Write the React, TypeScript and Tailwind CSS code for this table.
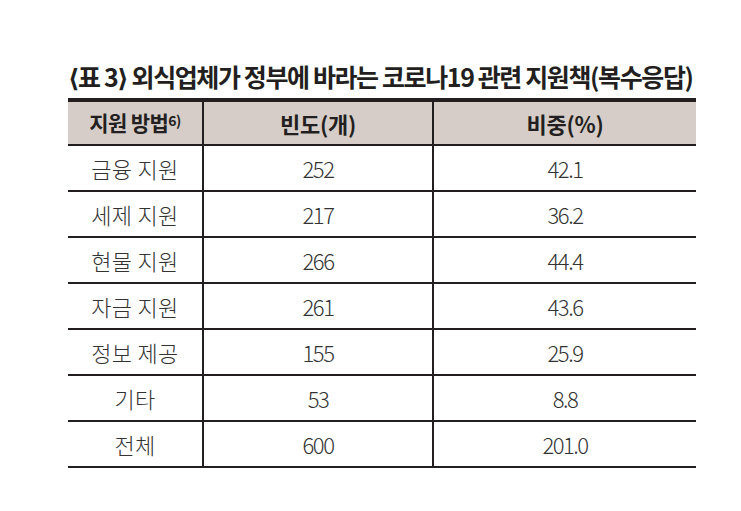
import React from "react";

const rows: [string, string, string][] = [
  ["금융 지원", "252", "42.1"],
  ["세제 지원", "217", "36.2"],
  ["현물 지원", "266", "44.4"],
  ["자금 지원", "261", "43.6"],
  ["정보 제공", "155", "25.9"],
  ["기타", "53", "8.8"],
  ["전체", "600", "201.0"],
];

export default function App() {
  return (
    <div
      className="w-[741px] h-[511px] bg-white pl-[68px] pt-[60px]"
      style={{ fontFamily: '"Noto Sans CJK KR", "Noto Sans", sans-serif' }}
    >
      <div className="text-[25px] font-bold leading-[32px] tracking-[-1.4px] text-[#231f20] h-[38px] whitespace-nowrap">
        <span className="font-['DejaVu_Sans'] font-bold">⟨</span>표 3<span className="font-['DejaVu_Sans'] font-bold">⟩</span> 외식업체가 정부에 바라는 코로나19 관련 지원책(복수응답)
      </div>
      <div className="w-[628px] border-t-[4px] border-[#231f20]">
        <div className="grid grid-cols-[134px_230px_264px] h-[44px] bg-[#d6cdc8] border-b-[2px] border-[#231f20]">
          <div className="flex items-center justify-center text-[21px] font-bold text-[#231f20] tracking-[-0.6px]">
            지원 방법<span className="text-[14px] relative -top-[3px] tracking-[-0.5px]">6)</span>
          </div>
          <div className="flex items-center justify-center border-l-[2px] border-[#231f20] text-[22px] font-bold text-[#231f20] tracking-[-0.3px]">
            빈도(개)
          </div>
          <div className="flex items-center justify-center border-l-[2px] border-[#231f20] text-[22px] font-bold text-[#231f20] tracking-[-0.3px]">
            비중(%)
          </div>
        </div>
        {rows.map((r) => (
          <div
            key={r[0]}
            className="grid grid-cols-[134px_230px_264px] h-[46px] border-b-[2px] border-[#231f20] text-[#333333]"
          >
            <div className="flex items-center justify-center text-[22px] font-light tracking-[0.3px]">{r[0]}</div>
            <div className="flex items-center justify-center border-l-[2px] border-[#231f20] text-[22px] font-light tracking-[-1.5px]">
              {r[1]}
            </div>
            <div className="flex items-center justify-center border-l-[2px] border-[#231f20] text-[22px] font-light tracking-[-1.5px]">
              {r[2]}
            </div>
          </div>
        ))}
      </div>
    </div>
  );
}
